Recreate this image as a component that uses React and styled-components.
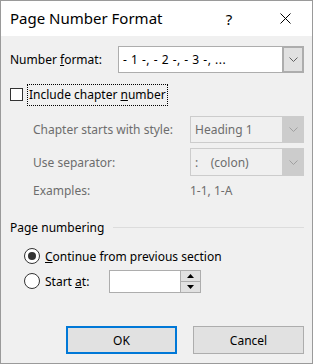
import React from 'react';
import styled, { createGlobalStyle } from 'styled-components';

const GlobalStyle = createGlobalStyle`
  html, body {
    margin: 0;
    padding: 0;
    background: #ffffff;
  }
  body {
    font-family: "Noto Sans", "Segoe UI", sans-serif;
    font-size: 12px;
    color: #000000;
  }
`;

const Window = styled.div`
  box-sizing: border-box;
  width: 313px;
  height: 364px;
  border: 1px solid #9a9a9a;
  background: #f0f0f0;
  display: flex;
  flex-direction: column;
`;

const TitleBar = styled.div`
  height: 35px;
  background: #ffffff;
  display: flex;
  align-items: center;
  padding: 0 4px 0 9px;
  font-size: 15px;
`;

const Title = styled.div`
  flex: 1;
  padding-bottom: 1px;
`;

const TitleButton = styled.div`
  width: 46px;
  height: 35px;
  margin-left: ${p => p.ml || 0}px;
  display: flex;
  align-items: center;
  justify-content: center;
  font-size: 15px;
  color: #000;
`;

const Body = styled.div`
  flex: 1;
  display: flex;
  flex-direction: column;
  padding: 10px 8px 0 9px;
`;

const Row = styled.div`
  display: flex;
  align-items: center;
  height: ${p => p.h || 28}px;
  margin-top: ${p => p.mt || 0}px;
  padding-left: ${p => p.indent || 0}px;
`;

const Label = styled.span`
  width: ${p => p.w}px;
  color: ${p => (p.disabled ? '#6d6d6d' : '#000')};
  flex-shrink: 0;
`;

const Select = styled.div`
  box-sizing: border-box;
  width: ${p => p.w}px;
  height: ${p => p.h}px;
  display: flex;
  border: 1px solid ${p => (p.disabled ? '#cccccc' : '#adadad')};
  background: ${p => (p.disabled ? '#f0f0f0' : '#ffffff')};
  color: ${p => (p.disabled ? '#6d6d6d' : '#000')};
`;

const SelectText = styled.div`
  flex: 1;
  display: flex;
  align-items: center;
  padding-left: 4px;
  white-space: pre;
  letter-spacing: ${p => p.spacing || 0}px;
`;

const SelectArrow = styled.div`
  width: 20px;
  display: flex;
  align-items: center;
  justify-content: center;
  background: ${p => (p.disabled ? '#cccccc' : '#e1e1e1')};
  border-left: 1px solid ${p => (p.disabled ? '#cccccc' : '#adadad')};
  box-shadow: ${p => (p.disabled ? 'none' : 'inset 0 0 0 1px #adadad')};
`;

const CheckBox = styled.div`
  box-sizing: border-box;
  width: 13px;
  height: 13px;
  border: 1px solid #333333;
  background: #ffffff;
  margin-right: 5px;
  flex-shrink: 0;
`;

const FocusLabel = styled.span`
  outline: 1px dotted #000;
  padding: 1px 1px 2px 1px;
`;

const GroupHeader = styled.div`
  display: flex;
  align-items: center;
  height: 20px;
  margin-top: 17px;
  &::after {
    content: '';
    flex: 1;
    height: 1px;
    background: #dcdcdc;
    margin-left: 9px;
  }
`;

const Radio = styled.div`
  box-sizing: border-box;
  width: 16px;
  height: 16px;
  border-radius: 50%;
  border: 1px solid #333333;
  background: #ffffff;
  margin-right: 5px;
  display: flex;
  align-items: center;
  justify-content: center;
  flex-shrink: 0;
  &::after {
    content: '';
    display: ${p => (p.checked ? 'block' : 'none')};
    width: 8px;
    height: 8px;
    border-radius: 50%;
    background: #333333;
  }
`;

const SpinBox = styled.div`
  box-sizing: border-box;
  width: 92px;
  height: 23px;
  border: 1px solid #adadad;
  background: #ffffff;
  display: flex;
  justify-content: flex-end;
`;

const SpinButtons = styled.div`
  width: 19px;
  display: flex;
  flex-direction: column;
  border-left: 1px solid #adadad;
`;

const SpinButton = styled.div`
  flex: 1;
  background: #e1e1e1;
  display: flex;
  align-items: center;
  justify-content: center;
  & + & {
    border-top: 1px solid #adadad;
  }
`;

const ButtonRow = styled.div`
  display: flex;
  justify-content: flex-end;
  gap: 16px;
  margin-top: auto;
  margin-bottom: 9px;
`;

const Button = styled.div`
  box-sizing: border-box;
  width: 111px;
  height: 28px;
  display: flex;
  align-items: center;
  justify-content: center;
  background: #e1e1e1;
  border: ${p => (p.primary ? '2px solid #0078d7' : '1px solid #adadad')};
`;

const Chevron = ({ color }) => (
  <svg width="9" height="5" viewBox="0 0 9 5">
    <path d="M0.5 0.5 L4.5 4.5 L8.5 0.5" fill="none" stroke={color} strokeWidth="1" />
  </svg>
);

const Tri = ({ up }) => (
  <svg width="7" height="4" viewBox="0 0 7 4">
    <path d={up ? 'M0 4 L7 4 L3.5 0 Z' : 'M0 0 L7 0 L3.5 4 Z'} fill="#000" />
  </svg>
);

const CloseIcon = () => (
  <svg width="11" height="11" viewBox="0 0 11 11">
    <path d="M0.5 0.5 L10.5 10.5 M10.5 0.5 L0.5 10.5" stroke="#000" strokeWidth="1" />
  </svg>
);

export default function App() {
  return (
    <>
      <GlobalStyle />
      <Window>
        <TitleBar>
          <Title>Page Number Format</Title>
          <TitleButton>?</TitleButton>
          <TitleButton ml={10}>
            <CloseIcon />
          </TitleButton>
        </TitleBar>
        <Body>
          <Row h={27}>
            <Label w={108}>
              Number <u>f</u>ormat:
            </Label>
            <Select w={186} h={27}>
              <SelectText spacing={0.5}>- 1 -, - 2 -, - 3 -, ...</SelectText>
              <SelectArrow>
                <Chevron color="#606060" />
              </SelectArrow>
            </Select>
          </Row>
          <Row h={19} mt={12}>
            <CheckBox />
            <FocusLabel>
              Include chapter <u>n</u>umber
            </FocusLabel>
          </Row>
          <Row h={27} mt={12} indent={23}>
            <Label w={157} disabled>
              Chapter starts with style:
            </Label>
            <Select w={115} h={27} disabled>
              <SelectText>Heading 1</SelectText>
              <SelectArrow disabled>
                <Chevron color="#a0a0a0" />
              </SelectArrow>
            </Select>
          </Row>
          <Row h={28} mt={5} indent={23}>
            <Label w={157} disabled>
              Use separator:
            </Label>
            <Select w={115} h={28} disabled>
              <SelectText>{':    (colon)'}</SelectText>
              <SelectArrow disabled>
                <Chevron color="#a0a0a0" />
              </SelectArrow>
            </Select>
          </Row>
          <Row h={20} mt={4} indent={23}>
            <Label w={157} disabled>
              Examples:
            </Label>
            <Label disabled>1-1, 1-A</Label>
          </Row>
          <GroupHeader>Page numbering</GroupHeader>
          <Row h={20} mt={9} indent={14}>
            <Radio checked />
            <span>
              <u>C</u>ontinue from previous section
            </span>
          </Row>
          <Row h={24} mt={3} indent={14}>
            <Radio />
            <Label w={64}>
              Start <u>a</u>t:
            </Label>
            <SpinBox>
              <SpinButtons>
                <SpinButton>
                  <Tri up />
                </SpinButton>
                <SpinButton>
                  <Tri />
                </SpinButton>
              </SpinButtons>
            </SpinBox>
          </Row>
          <ButtonRow>
            <Button primary>OK</Button>
            <Button>Cancel</Button>
          </ButtonRow>
        </Body>
      </Window>
    </>
  );
}
